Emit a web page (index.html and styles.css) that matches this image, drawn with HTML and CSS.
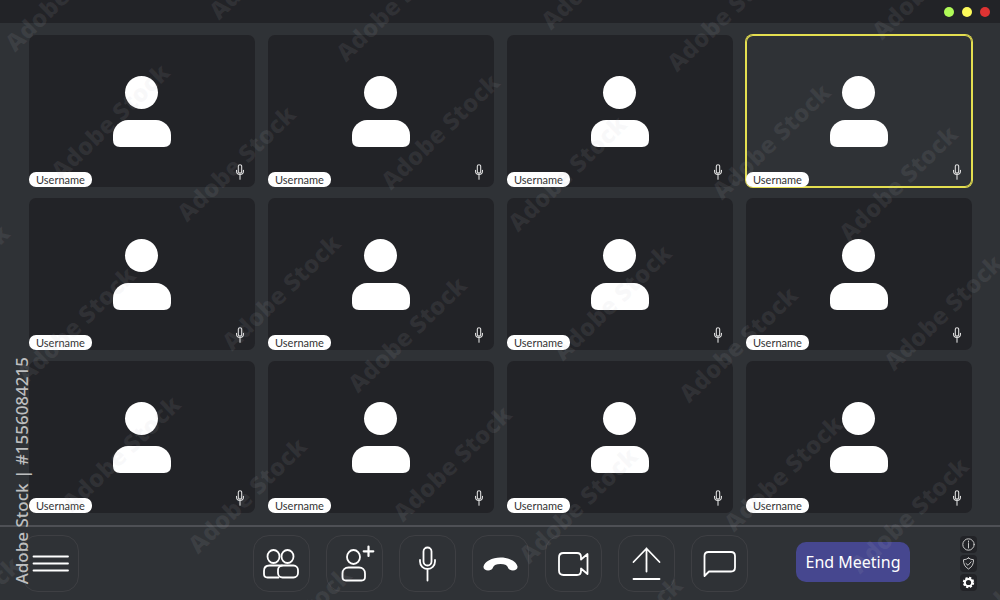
FILE: index.html
```html
<!DOCTYPE html>
<html lang="en">
<head>
<meta charset="utf-8">
<meta name="viewport" content="width=device-width, initial-scale=1">
<title>Meeting</title>
<link rel="stylesheet" href="styles.css">
</head>
<body>
<svg class="sprite" aria-hidden="true">
  <symbol id="person" viewBox="0 0 58 71">
    <circle cx="28.5" cy="16.5" r="16.5"/>
    <path d="M15 44H43C51 44 58 51 58 59V64Q58 71 51 71H7Q0 71 0 64V59C0 51 7 44 15 44Z"/>
  </symbol>
  <symbol id="mic" viewBox="0 0 18 35">
    <rect x="5.2" y="1" width="7.6" height="19" rx="3.8"/>
    <path d="M1.2 13.5V15A7.8 7.8 0 0 0 16.800 15V13.500M9 23V34"/>
  </symbol>
</svg>

<header class="titlebar">
  <button class="dot dot-green" aria-label="Minimize"></button>
  <button class="dot dot-yellow" aria-label="Maximize"></button>
  <button class="dot dot-red" aria-label="Close"></button>
</header>

<main class="grid">
  <article class="tile"><svg class="avatar"><use href="#person"/></svg><span class="name">Username</span><svg class="tile-mic"><use href="#mic"/></svg></article>
  <article class="tile"><svg class="avatar"><use href="#person"/></svg><span class="name">Username</span><svg class="tile-mic"><use href="#mic"/></svg></article>
  <article class="tile"><svg class="avatar"><use href="#person"/></svg><span class="name">Username</span><svg class="tile-mic"><use href="#mic"/></svg></article>
  <article class="tile speaking"><svg class="avatar"><use href="#person"/></svg><span class="name">Username</span><svg class="tile-mic"><use href="#mic"/></svg></article>
  <article class="tile"><svg class="avatar"><use href="#person"/></svg><span class="name">Username</span><svg class="tile-mic"><use href="#mic"/></svg></article>
  <article class="tile"><svg class="avatar"><use href="#person"/></svg><span class="name">Username</span><svg class="tile-mic"><use href="#mic"/></svg></article>
  <article class="tile"><svg class="avatar"><use href="#person"/></svg><span class="name">Username</span><svg class="tile-mic"><use href="#mic"/></svg></article>
  <article class="tile"><svg class="avatar"><use href="#person"/></svg><span class="name">Username</span><svg class="tile-mic"><use href="#mic"/></svg></article>
  <article class="tile"><svg class="avatar"><use href="#person"/></svg><span class="name">Username</span><svg class="tile-mic"><use href="#mic"/></svg></article>
  <article class="tile"><svg class="avatar"><use href="#person"/></svg><span class="name">Username</span><svg class="tile-mic"><use href="#mic"/></svg></article>
  <article class="tile"><svg class="avatar"><use href="#person"/></svg><span class="name">Username</span><svg class="tile-mic"><use href="#mic"/></svg></article>
  <article class="tile"><svg class="avatar"><use href="#person"/></svg><span class="name">Username</span><svg class="tile-mic"><use href="#mic"/></svg></article>
</main>

<footer class="controls">
  <button class="control" aria-label="Menu">
    <svg class="icon" viewBox="0 0 55 55"><path d="M10.500 20.500H45M10.500 27.500H45M10.500 34.500H45"/></svg>
  </button>
  <div class="toolbar">
    <button class="control" aria-label="Participants">
      <svg class="icon" viewBox="0 0 55 55"><ellipse cx="19.500" cy="20.500" rx="6" ry="6.500"/><ellipse cx="33.500" cy="20.500" rx="6" ry="6.500"/><rect x="24" y="29.500" width="20" height="12" rx="4.500"/><path d="M24.500 41.500H13.500Q10 41.500 10 38V35Q10 29.500 15.500 29.500H28"/></svg>
    </button>
    <button class="control" aria-label="Add participant">
      <svg class="icon" viewBox="0 0 55 55"><ellipse cx="26.500" cy="21" rx="6.500" ry="7"/><path d="M21.500 31.500H32C35.500 31.500 38 34 38 37.500V41Q38 44.500 34.500 44.500H19Q15.500 44.500 15.500 41V37.500C15.500 34 18 31.500 21.500 31.500Z"/><path class="plus" d="M41.500 10.500V20M36.700 15.300H46.300"/></svg>
    </button>
    <button class="control" aria-label="Microphone">
      <svg class="icon" viewBox="0 0 55 55"><rect x="23.500" y="11.500" width="8" height="18" rx="4"/><path d="M20 24V25.500A7.500 7.500 0 0 0 35 25.500V24M27.500 33V44.500"/></svg>
    </button>
    <button class="control" aria-label="Hang up">
      <svg class="icon" viewBox="0 0 55 55"><path class="solid" d="M27.500 21.500C19 21.500 11.500 25.500 10.500 30.500C10 34 15 35.500 18.500 33.500C21.500 31.500 18.500 28.500 27.500 28C36.500 28.500 33.500 31.500 36.500 33.500C40 35.500 45 34 44.500 30.500C43.500 25.500 36 21.500 27.500 21.500Z"/></svg>
    </button>
    <button class="control" aria-label="Camera">
      <svg class="icon" viewBox="0 0 55 55"><path d="M17.500 17H31Q35 17 35 21V23.500L41.500 18V38L35 32.500V35Q35 39 31 39H17.500Q13 39 13 34.500V21.500Q13 17 17.500 17Z"/></svg>
    </button>
    <button class="control" aria-label="Share">
      <svg class="icon" viewBox="0 0 55 55"><path d="M27.500 35.500V12.500M14.500 26L27.500 12.500L40.500 26M14.500 43H40.500"/></svg>
    </button>
    <button class="control" aria-label="Chat">
      <svg class="icon" viewBox="0 0 55 55"><path d="M12.500 40V20Q12.500 16 16.500 16H39Q43 16 43 20V31.500Q43 35.500 39 35.500H17Z"/></svg>
    </button>
  </div>
  <button class="end">End Meeting</button>
  <div class="side">
    <button class="mini" aria-label="Information"><svg viewBox="0 0 17 17"><circle cx="8.500" cy="8.500" r="5.700"/><path d="M8.500 7.500V12M8.500 5V6.200"/></svg></button>
    <button class="mini" aria-label="Security"><svg viewBox="0 0 17 17"><path d="M8.500 3Q10.700 4.800 13.500 4.700Q13.800 11 8.500 14Q3.200 11 3.500 4.700Q6.300 4.800 8.500 3ZM6 8.500L8 10.300L11.200 6.800"/></svg></button>
    <button class="mini" aria-label="Settings"><svg viewBox="0 0 17 17"><circle class="gear-teeth" cx="8.500" cy="8.500" r="4.700"/><circle class="gear-ring" cx="8.500" cy="8.500" r="3.600"/></svg></button>
  </div>
</footer>

<svg class="watermark" aria-hidden="true">
  <text transform="translate(219 21) rotate(-44)">Adobe Stock</text>
  <text transform="translate(551 31) rotate(-44)">Adobe Stock</text>
  <text transform="translate(882 41) rotate(-44)">Adobe Stock</text>
  <text transform="translate(15 53) rotate(-44)">Adobe Stock</text>
  <text transform="translate(346 63) rotate(-44)">Adobe Stock</text>
  <text transform="translate(677 73) rotate(-44)">Adobe Stock</text>
  <text transform="translate(61 181) rotate(-44)">Adobe Stock</text>
  <text transform="translate(391 191) rotate(-44)">Adobe Stock</text>
  <text transform="translate(722 201) rotate(-44)">Adobe Stock</text>
  <text transform="translate(187 223) rotate(-44)">Adobe Stock</text>
  <text transform="translate(518 233) rotate(-44)">Adobe Stock</text>
  <text transform="translate(849 243) rotate(-44)">Adobe Stock</text>
  <text transform="translate(-99 342) rotate(-44)">Adobe Stock</text>
  <text transform="translate(232 352) rotate(-44)">Adobe Stock</text>
  <text transform="translate(563 362) rotate(-44)">Adobe Stock</text>
  <text transform="translate(894 372) rotate(-44)">Adobe Stock</text>
  <text transform="translate(27 384) rotate(-44)">Adobe Stock</text>
  <text transform="translate(358 394) rotate(-44)">Adobe Stock</text>
  <text transform="translate(689 404) rotate(-44)">Adobe Stock</text>
  <text transform="translate(72 513) rotate(-44)">Adobe Stock</text>
  <text transform="translate(403 523) rotate(-44)">Adobe Stock</text>
  <text transform="translate(734 533) rotate(-44)">Adobe Stock</text>
  <text transform="translate(198 555) rotate(-44)">Adobe Stock</text>
  <text transform="translate(529 565) rotate(-44)">Adobe Stock</text>
  <text transform="translate(860 575) rotate(-44)">Adobe Stock</text>
  <text transform="translate(-88 674) rotate(-44)">Adobe Stock</text>
  <text transform="translate(243 684) rotate(-44)">Adobe Stock</text>
  <text transform="translate(574 694) rotate(-44)">Adobe Stock</text>
  <text transform="translate(905 704) rotate(-44)">Adobe Stock</text>
</svg>
<p class="credit">Adobe Stock | #1556084215</p>
</body>
</html>
```
FILE: styles.css
```css
* {
  box-sizing: border-box;
}

body {
  position: relative;
  display: flex;
  flex-direction: column;
  min-height: 100vh;
  margin: 0;
  overflow-x: hidden;
  background: #2f3236;
  color: #fff;
  font-family: "Noto Sans", "Open Sans", sans-serif;
}

button {
  padding: 0;
  border: 0;
  color: inherit;
  font: inherit;
  cursor: pointer;
}

.sprite {
  position: absolute;
  width: 0;
  height: 0;
}

.titlebar {
  display: flex;
  align-items: center;
  justify-content: flex-end;
  gap: 8px;
  height: 23px;
  padding: 0 10px;
  background: #222327;
}

.dot {
  width: 10px;
  height: 10px;
  border-radius: 50%;
}

.dot-green { background: #b0fa58; }
.dot-yellow { background: #fcfa5a; }
.dot-red { background: #de3333; }

.grid {
  flex: 1;
  display: grid;
  grid-template-columns: repeat(4, 1fr);
  grid-auto-rows: 1fr;
  gap: 11px 13px;
  padding: 12px 28px 12px 29px;
}

.tile {
  position: relative;
  display: grid;
  place-items: center;
  min-height: 120px;
  border-radius: 7px;
  background: #222327;
}

.speaking {
  background: #2f3236;
  box-shadow: 0 0 0 1px #e4de50, inset 0 0 0 1px #e4de50;
}

.avatar {
  width: 58px;
  height: 71px;
  fill: #fff;
}

.name {
  position: absolute;
  left: 0;
  bottom: 0;
  padding: 0 7px;
  border-radius: 7px;
  background: #fff;
  color: #333;
  font-family: Lato, sans-serif;
  font-size: 11px;
  line-height: 15px;
}

.tile-mic {
  position: absolute;
  right: 11px;
  bottom: 7px;
  width: 8px;
  height: 16px;
  fill: none;
  stroke: #e2e2e2;
  stroke-width: 2.4;
  stroke-linecap: round;
}

.controls {
  display: flex;
  align-items: flex-start;
  padding: 8px 23px 8px 22px;
  border-top: 2px solid #4e5055;
}

.control {
  width: 57px;
  height: 57px;
  border: 1px solid #3e3f43;
  border-radius: 16px;
  background: transparent;
}

.icon {
  display: block;
  width: 55px;
  height: 55px;
  fill: none;
  stroke: #fff;
  stroke-width: 1.8;
  stroke-linecap: round;
  stroke-linejoin: round;
}

.icon .solid {
  fill: #fff;
  stroke: none;
}

.icon .plus {
  stroke-width: 2.2;
}

.toolbar {
  display: flex;
  gap: 16px;
  margin-left: auto;
}

.end {
  width: 114px;
  height: 40px;
  margin: 7px 50px 0 48px;
  border-radius: 10px;
  background: #46478f;
  font-size: 16px;
}

.side {
  display: flex;
  flex-direction: column;
  gap: 2px;
  padding-top: 1px;
}

.mini {
  width: 17px;
  height: 17px;
  border-radius: 4px;
  background: #222327;
}

.mini svg {
  display: block;
  fill: none;
  stroke: #c8c8c8;
  stroke-width: 1;
  stroke-linecap: round;
}

.mini .gear-teeth {
  stroke: #fff;
  stroke-width: 2;
  stroke-linecap: butt;
  stroke-dasharray: 2.200 1.490;
}

.mini .gear-ring {
  stroke: #fff;
  stroke-width: 2;
}

.watermark {
  position: absolute;
  inset: 0;
  width: 100%;
  height: 100%;
  overflow: hidden;
  fill: rgba(190, 190, 195, 0.09);
  font-family: "Open Sans", sans-serif;
  font-size: 24px;
  font-weight: 800;
  pointer-events: none;
}

.credit {
  position: absolute;
  left: 10px;
  bottom: 16px;
  margin: 0;
  color: #bdbebf;
  font-size: 17px;
  line-height: 24px;
  font-weight: 500;
  white-space: nowrap;
  writing-mode: vertical-rl;
  transform: rotate(180deg);
  pointer-events: none;
}
```
